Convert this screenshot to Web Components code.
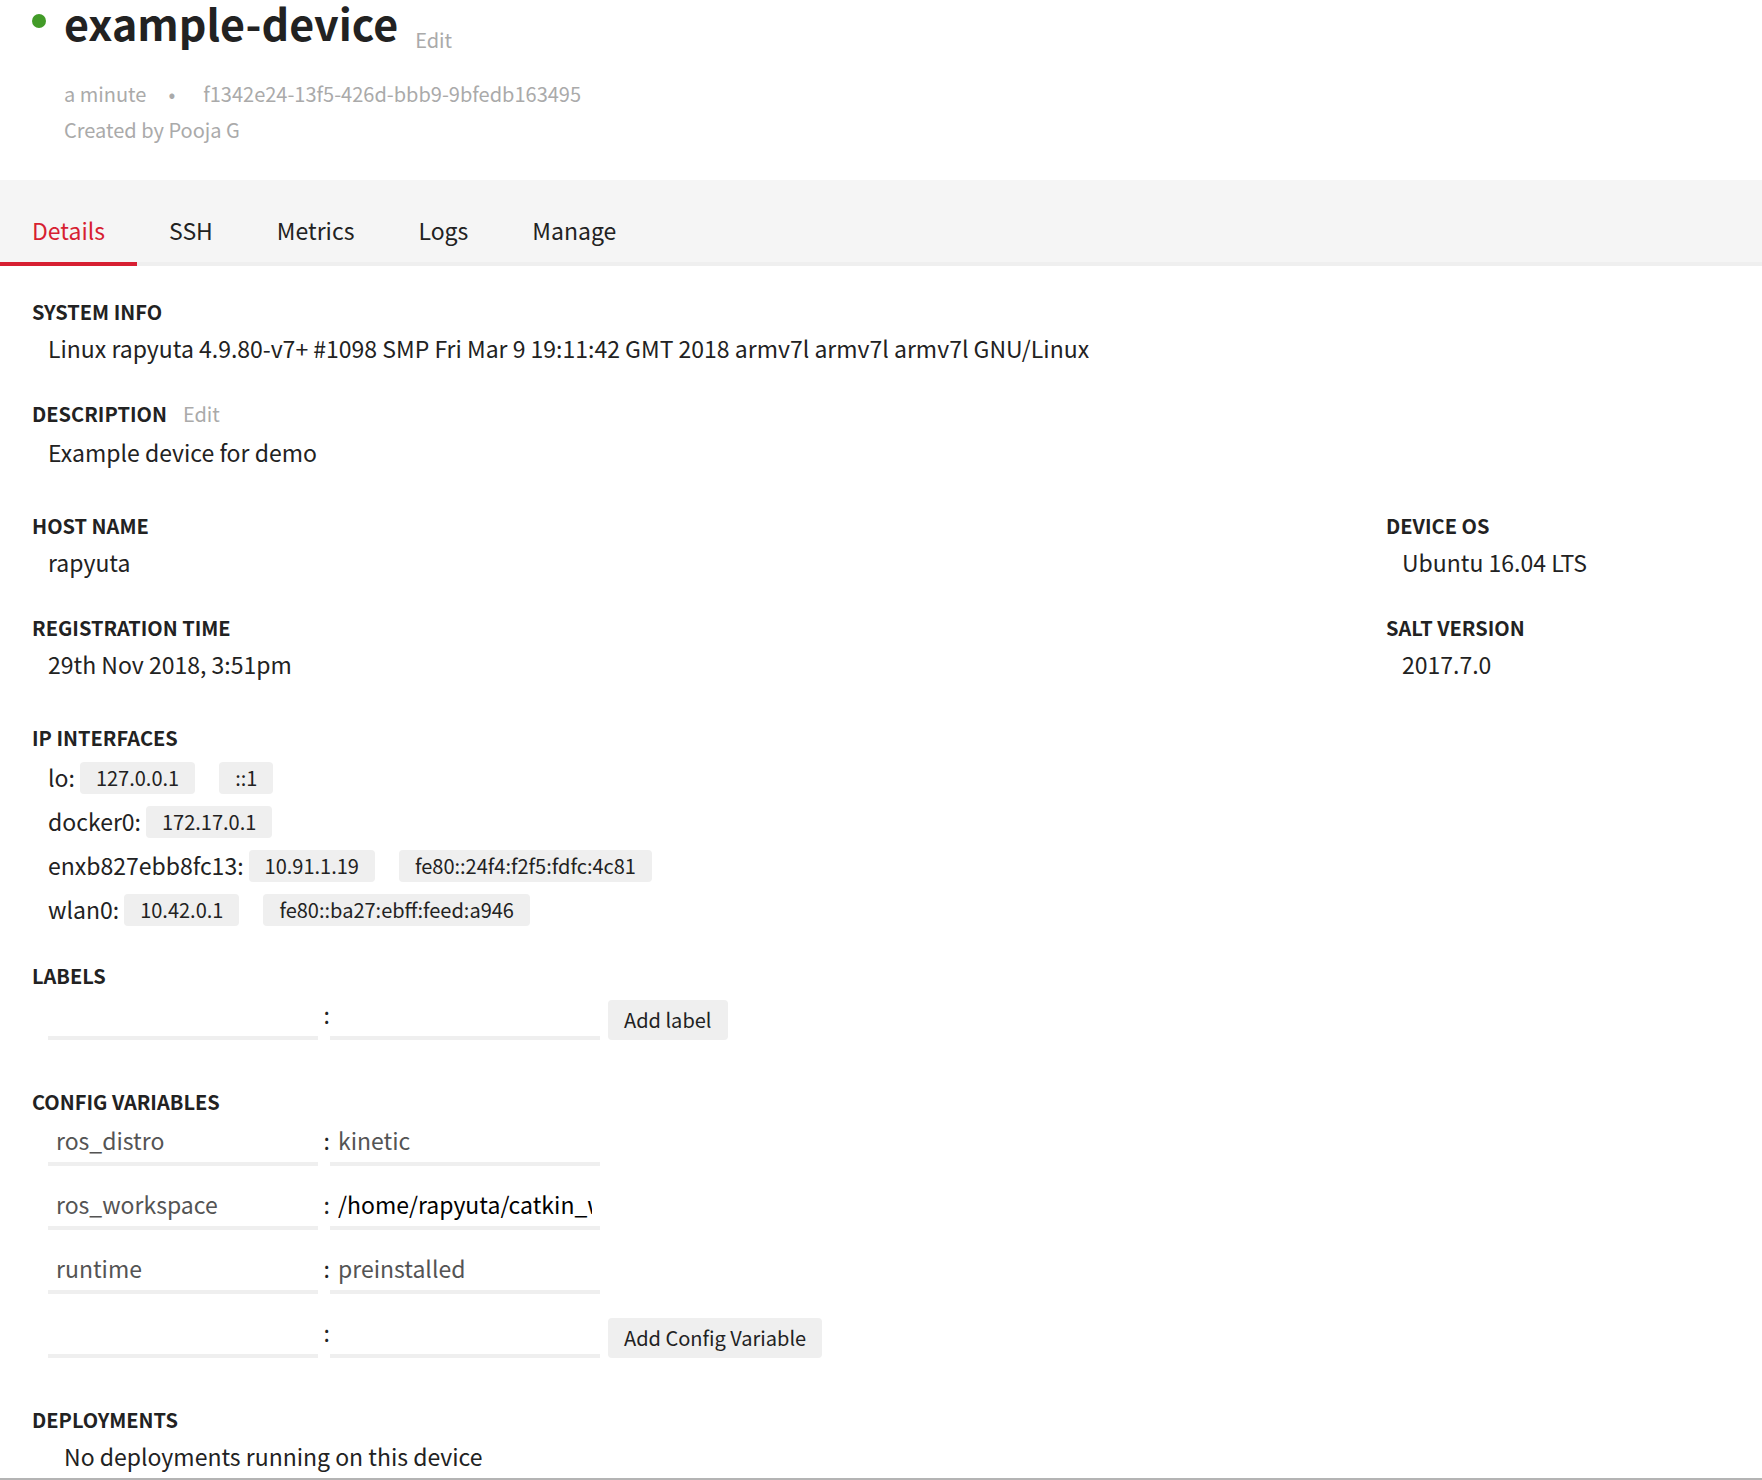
<!DOCTYPE html>
<html lang="en">
<head>
<meta charset="utf-8">
<title>example-device</title>
<style>
  body {
    margin: 0;
    background: #fff;
    color: #222;
    font: 23px/40px "Noto Sans CJK JP", "Noto Sans CJK SC", sans-serif;
  }
</style>
</head>
<body>
<device-page></device-page>

<script>
const define = (name, html, setup) => {
  const template = document.createElement('template');
  template.innerHTML = html;
  customElements.define(name, class extends HTMLElement {
    connectedCallback() {
      if (this.shadowRoot) return;
      const root = this.attachShadow({ mode: 'open' });
      root.append(template.content.cloneNode(true));
      if (setup) setup(this, root);
    }
  });
};

define('edit-button', `
  <style>
    :host { display: block; padding-bottom: 2px; }
    button { display: block; margin: 0; padding: 0; border: 0; background: none; color: #aaa;
             font: inherit; font-size: 20px; line-height: 32px; font-weight: 400; cursor: pointer; }
  </style>
  <button type="button"><slot>Edit</slot></button>`,
  (el, root) => root.querySelector('button').setAttribute('aria-label', 'Edit ' + el.getAttribute('subject')));

define('device-header', `
  <style>
    :host { display: flex; gap: 18px; padding: 0 32px 32px; }
    .dot { flex: none; width: 14px; height: 14px; margin-top: 14px; border-radius: 50%; background: #429b28; }
    .title { display: flex; align-items: flex-start; gap: 17px; }
    h1 { margin: 0; font-size: 43px; line-height: 44px; font-weight: 700; }
    edit-button { padding-top: 24px; }
    .meta { margin-top: 18px; color: #aaa; font-size: 20px; line-height: 36px; }
    .line { display: flex; }
    .bullet { margin: 0 28px 0 22px; }
  </style>
  <div class="dot" role="img" aria-label="Online"></div>
  <div>
    <div class="title"><h1><slot name="name"></slot></h1><edit-button subject="name"></edit-button></div>
    <div class="meta">
      <div class="line"><slot name="age"></slot><span class="bullet">•</span><slot name="id"></slot></div>
      <slot name="author"></slot>
    </div>
  </div>`);

define('tab-bar', `
  <style>
    :host { display: block; background: #f5f5f5; }
    nav { display: flex; box-shadow: inset 0 -4px #efefef; }
  </style>
  <nav aria-label="Device sections"><slot></slot></nav>`);

define('tab-link', `
  <style>
    :host { display: block; }
    a { display: block; padding: 32px 32px 14px; border-bottom: 4px solid transparent;
        line-height: 36px; color: inherit; text-decoration: none; }
    :host([active]) a { color: #d71f32; border-color: #d71f32; }
  </style>
  <a href="#"><slot></slot></a>`,
  (el, root) => { if (el.hasAttribute('active')) root.querySelector('a').setAttribute('aria-current', 'page'); });

define('info-section', `
  <style>
    :host { display: block; }
    .head { display: flex; gap: 16px; }
    h2 { margin: 0; font-size: 20px; line-height: 32px; font-weight: 700; }
    .body { padding-left: 16px; }
    :host([inset]) .body { padding-left: 32px; }
    :host([list]) .body { padding-top: 8px; }
  </style>
  <div class="head"><h2></h2><slot name="action"></slot></div>
  <div class="body"><slot></slot></div>`,
  (el, root) => { root.querySelector('h2').textContent = el.getAttribute('heading'); });

define('ip-row', `
  <style>
    :host { display: flex; align-items: center; gap: 24px; line-height: 32px; }
    :host(:not(:last-child)) { margin-bottom: 12px; }
    .first { display: flex; gap: 5px; }
    .name { line-height: 30px; }
    .chip { padding: 0 16px; border-radius: 4px; background: #efefef; font-size: 20px; }
  </style>
  <div class="first"><span class="name"></span></div>`,
  (el, root) => {
    root.querySelector('.name').textContent = el.getAttribute('name') + ':';
    el.getAttribute('addresses').split(' ').forEach((address, i) => {
      const chip = document.createElement('span');
      chip.className = 'chip';
      chip.textContent = address;
      (i ? root : root.querySelector('.first')).append(chip);
    });
  });

define('pair-row', `
  <style>
    :host { display: flex; align-items: flex-start; height: 40px; }
    :host(:not(:last-child)) { margin-bottom: 24px; }
    input { box-sizing: border-box; width: 270px; height: 40px; margin: 0; padding: 0 8px 8px; border: 0;
            border-bottom: 4px solid #efefef; border-radius: 0; background: none; color: #000;
            font: inherit; line-height: 28px; outline: 0; }
    input:disabled { color: #545454; }
    .colon { width: 12px; text-align: right; line-height: 28px; }
    button { height: 40px; margin: 0 0 0 8px; padding: 0 16px; border: 0; border-radius: 4px;
             background: #efefef; color: #222; font: inherit; font-size: 20px; line-height: 40px; cursor: pointer; }
  </style>
  <input class="key" aria-label="Key"><span class="colon">:</span><input class="value" aria-label="Value">`,
  (el, root) => {
    const key = root.querySelector('.key'), value = root.querySelector('.value');
    key.value = el.getAttribute('key') || '';
    value.value = el.getAttribute('value') || '';
    key.disabled = el.hasAttribute('key');
    value.disabled = el.hasAttribute('locked');
    if (el.hasAttribute('action')) {
      const button = document.createElement('button');
      button.type = 'button';
      button.textContent = el.getAttribute('action');
      root.append(button);
    }
  });

define('device-page', `
  <style>
    :host { display: block; border-bottom: 2px solid #b4b4b4; }
    main { display: flex; flex-direction: column; gap: 38px; padding: 30px 32px 2px; }
    .stack { display: flex; flex-direction: column; gap: 30px; }
    .grid { display: grid; grid-template-columns: 1fr 344px; row-gap: 30px; }
    .forms { display: flex; flex-direction: column; gap: 46px; }
    .network { display: flex; flex-direction: column; gap: 34px; }
  </style>
  <device-header>
    <span slot="name">example-device</span>
    <span slot="age">a minute</span>
    <span slot="id">f1342e24-13f5-426d-bbb9-9bfedb163495</span>
    <span slot="author">Created by Pooja G</span>
  </device-header>
  <tab-bar>
    <tab-link active>Details</tab-link>
    <tab-link>SSH</tab-link>
    <tab-link>Metrics</tab-link>
    <tab-link>Logs</tab-link>
    <tab-link>Manage</tab-link>
  </tab-bar>
  <main>
    <div class="stack">
      <info-section heading="SYSTEM INFO">Linux rapyuta 4.9.80-v7+ #1098 SMP Fri Mar 9 19:11:42 GMT 2018 armv7l armv7l armv7l GNU/Linux</info-section>
      <info-section heading="DESCRIPTION"><edit-button slot="action" subject="description"></edit-button>Example device for demo</info-section>
    </div>
    <div class="grid">
      <info-section heading="HOST NAME">rapyuta</info-section>
      <info-section heading="DEVICE OS">Ubuntu 16.04 LTS</info-section>
      <info-section heading="REGISTRATION TIME">29th Nov 2018, 3:51pm</info-section>
      <info-section heading="SALT VERSION">2017.7.0</info-section>
    </div>
    <div class="network">
      <info-section heading="IP INTERFACES" list>
        <ip-row name="lo" addresses="127.0.0.1 ::1"></ip-row>
        <ip-row name="docker0" addresses="172.17.0.1"></ip-row>
        <ip-row name="enxb827ebb8fc13" addresses="10.91.1.19 fe80::24f4:f2f5:fdfc:4c81"></ip-row>
        <ip-row name="wlan0" addresses="10.42.0.1 fe80::ba27:ebff:feed:a946"></ip-row>
      </info-section>
      <div class="forms">
        <info-section heading="LABELS" list>
          <pair-row action="Add label"></pair-row>
        </info-section>
        <info-section heading="CONFIG VARIABLES" list>
          <pair-row key="ros_distro" value="kinetic" locked></pair-row>
          <pair-row key="ros_workspace" value="/home/rapyuta/catkin_ws"></pair-row>
          <pair-row key="runtime" value="preinstalled" locked></pair-row>
          <pair-row action="Add Config Variable"></pair-row>
        </info-section>
        <info-section heading="DEPLOYMENTS" inset>No deployments running on this device</info-section>
      </div>
    </div>
  </main>`);
</script>
</body>
</html>
